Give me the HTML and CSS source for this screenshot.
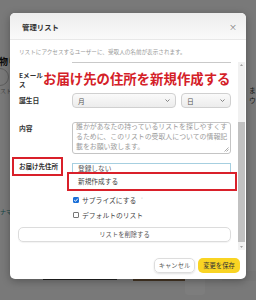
FILE: index.html
```html
<!DOCTYPE html>
<html lang="ja">
<head>
<meta charset="utf-8">
<link rel="stylesheet" href="styles.css">
</head>
<body>
<div class="page">
  <div class="bg-heading">物り</div>
  <div class="bg-circle"></div>
  <div class="bg-sub">ストー</div>
  <div class="bg-side">
    <div class="bg-left-img">ナマ</div>
    <div class="bg-right-text">ま<br>ウ</div>
  </div>
  <div class="bg-products">
    <div class="bg-frame"></div>
    <div class="bg-wood"></div>
    <div class="bg-box"></div>
    <div class="bg-card"></div>
  </div>
</div>
<div class="overlay"></div>

<div class="modal">
  <div class="modal-header">
    <span class="title">管理リスト</span>
    <span class="close">×</span>
  </div>
  <p class="desc">リストにアクセスするユーザーに、受取人の名前が表示されます。</p>
  <div class="scroll-wrap">
    <div class="scroll-content">
      <div class="top-line"></div>
      <div class="row email-row">
        <div class="label">Eメール<br>ス</div>
      </div>
      <div class="row birth-row">
        <div class="label">誕生日</div>
        <div class="field selects">
          <div class="select month">月
            <svg class="chev" width="5" height="3" viewBox="0 0 5 3"><polyline points="0.5,0.5 2.5,2.5 4.5,0.5" fill="none" stroke="#777" stroke-width="0.9"/></svg>
          </div>
          <div class="select day">日
            <svg class="chev" width="5" height="3" viewBox="0 0 5 3"><polyline points="0.5,0.5 2.5,2.5 4.5,0.5" fill="none" stroke="#777" stroke-width="0.9"/></svg>
          </div>
        </div>
      </div>
      <div class="row content-row">
        <div class="label">内容</div>
        <div class="field">
          <div class="textarea">
            <div class="ta-text">
              <div>誰かがあなたの持っているリストを探しやすくす</div>
              <div>るために、このリストの受取人についての情報記</div>
              <div>載をお願い致します。</div>
            </div>
            <svg class="grip" width="5" height="5" viewBox="0 0 5 5"><path d="M4.5 0.5 L0.5 4.5 M4.5 2.5 L2.5 4.5" stroke="#888" stroke-width="0.7"/></svg>
          </div>
        </div>
      </div>
      <div class="row addr-row">
        <div class="label"><div class="redbox">お届け先住所</div></div>
        <div class="field">
          <div class="dropdown">
            <div class="opt-first">登録しない</div>
            <div class="opt-new">新規作成する</div>
          </div>
        </div>
      </div>
      <div class="check-row">
        <span class="cb checked"><svg width="6" height="6" viewBox="0 0 6 6"><polyline points="1.2,3.1 2.5,4.3 4.9,1.6" fill="none" stroke="#fff" stroke-width="1"/></svg></span>
        <span>サプライズにする</span><span class="caret">˅</span>
      </div>
      <div class="check-row">
        <span class="cb"></span>
        <span>デフォルトのリスト</span>
      </div>
      <div class="delete-btn">リストを削除する</div>
    </div>
    <div class="scrollbar">
      <div class="sb-arrow"><svg width="7" height="6" viewBox="0 0 7 6"><polygon points="3.5,2 5,4 2,4" fill="#a0a0a0"/></svg></div>
      <div class="sb-track"><div class="sb-thumb"></div></div>
      <div class="sb-arrow"><svg width="7" height="6" viewBox="0 0 7 6"><polygon points="2,2 5,2 3.5,4" fill="#a0a0a0"/></svg></div>
    </div>
  </div>
  <div class="footer">
    <div class="btn btn-cancel">キャンセル</div>
    <div class="btn btn-save">変更を保存</div>
  </div>
  <div class="annotation">お届け先の住所を新規作成する</div>
</div>
</body>
</html>
```

FILE: styles.css
```css
* { box-sizing: border-box; margin: 0; padding: 0; }
html, body { width: 256px; height: 300px; overflow: hidden; }
body {
  font-family: "Noto Sans CJK JP", "Noto Sans", sans-serif;
  background: #f3f3f3;
  color: #333;
  position: relative;
}

/* background page */
.page { padding-top: 56px; }
.bg-heading { font-size: 9px; font-weight: 700; color: #111; margin-left: -1px; line-height: 12px; }
.bg-circle { width: 18px; height: 18px; border: 1px solid #bbb; border-radius: 50%; margin-left: -9px; }
.bg-sub { font-size: 6px; color: #888; margin-top: 1px; line-height: 8px; }
.bg-side { display: flex; justify-content: space-between; margin-top: 100px; height: 40px; }
.bg-left-img { font-size: 6px; color: #2a8a8a; padding-top: 12px; }
.bg-right-text { font-size: 7px; color: #333; margin-top: -110px; line-height: 10px; }
.bg-products { display: flex; margin-top: 36px; padding-left: 43px; }
.bg-frame { width: 74px; height: 9px; border-bottom: 2px solid #444; background: #e4e4e4; }
.bg-wood { width: 52px; height: 10px; margin-left: 16px; background: #8a6a4a; }
.bg-box { width: 20px; height: 24px; background: #fafafa; border-radius: 0 0 4px 4px; }
.bg-card { width: 34px; height: 10px; margin-left: 17px; background: #ececec; }

.overlay { position: absolute; inset: 0; background: rgba(0, 0, 0, 0.5); }

/* modal */
.modal {
  position: absolute; left: 10px; top: 13px;
  width: 236px; height: 266px;
  background: #fff; border-radius: 5px;
  box-shadow: 0 2px 8px rgba(0,0,0,0.3);
  overflow: hidden;
  display: flex; flex-direction: column;
}
.modal-header {
  height: 27px; flex: none;
  display: flex; align-items: center; justify-content: space-between;
  padding: 0 9px 0 12px;
  background: linear-gradient(#ededed, #fafafa);
  border-bottom: 1px solid #e8e8e8;
}
.title { font-size: 7.4px; font-weight: 700; color: #333; }
.close { font-size: 8px; color: #777; }
.desc { height: 22px; flex: none; font-size: 5.6px; line-height: 10px; color: #9a9a9a; padding: 7px 9px 0; white-space: nowrap; }

.scroll-wrap { height: 188px; flex: none; display: flex; }
.scroll-content { flex: 1; min-width: 0; padding: 0 7px 0 9px; overflow: hidden; }
.top-line { height: 1px; margin-left: 53px; background: #c9c9c9; }
.row { display: flex; }
.label { width: 53px; flex: none; font-size: 6.8px; font-weight: 700; color: #333; }
.field { flex: 1; min-width: 0; }

.email-row { height: 27px; }
.email-row .label { padding-top: 8px; line-height: 9px; font-size: 6.6px; }

.birth-row { margin-top: 3px; height: 15px; }
.birth-row .label { line-height: 15px; }
.selects { display: flex; gap: 5px; }
.select {
  height: 15px; border: 1px solid #d0d0d0; border-radius: 4px;
  background: linear-gradient(#fafafa, #ececec);
  display: flex; align-items: center; justify-content: space-between;
  padding: 0 5px 0 5px; font-size: 6.8px; color: #555;
}
.month { width: 104px; }
.day { width: 50px; }

.content-row { margin-top: 14px; }
.content-row .label { line-height: 12px; }
.textarea {
  height: 32px; border: 1px solid #c4c4c4; border-radius: 3px;
  padding: 0 3px; overflow: hidden; position: relative;
  font-size: 6.9px; line-height: 10px; color: #9a9a9a;
}
.ta-text { margin-top: -2px; white-space: nowrap; }
.grip { position: absolute; right: 1px; bottom: 1px; }

.addr-row { margin-top: 3px; }
.redbox {
  margin-left: -7px; width: 51px; height: 19px;
  border: 2px solid #d9202a; padding-left: 5px;
  line-height: 15px; font-size: 6.5px; white-space: nowrap;
}
.dropdown { margin-top: 6px; font-size: 6.7px; color: #444; }
.opt-first {
  height: 10px; border: 1px solid #a6cfe0; border-bottom: none;
  padding-left: 5px; line-height: 9px; color: #555;
}
.opt-new {
  margin: -1px -6px 0 -5px; height: 19px;
  border: 2px solid #d9202a; background: #fff;
  padding-left: 9px; line-height: 15px;
}

.check-row {
  height: 15px; display: flex; align-items: center;
  padding-left: 54px; font-size: 6.8px; color: #444;
}
.addr-row + .check-row { margin-top: 1px; }
.cb {
  width: 6px; height: 6px; border: 1px solid #777; border-radius: 1px;
  margin-right: 3px; background: #fff; display: flex; flex: none;
}
.cb.checked { background: #1a6fd8; border-color: #1a6fd8; }
.cb.checked svg { margin: -1px; }
.caret { font-size: 5px; color: #999; margin-left: 5px; }

.delete-btn {
  margin: 5px 0 0 -1px; height: 15px;
  border: 1px solid #dcdcdc; border-radius: 5px;
  box-shadow: 0 1px 1px rgba(0,0,0,0.05);
  font-size: 6.3px; line-height: 13px; text-align: center; color: #555;
}

.scrollbar { width: 7px; margin-right: 1px; background: #f1f1f1; display: flex; flex-direction: column; }
.sb-arrow { height: 6px; flex: none; display: flex; }
.sb-track { flex: 1; }
.sb-thumb { margin-top: 54px; height: 120px; background: #c1c1c1; }

.footer { flex: 1; display: flex; justify-content: flex-end; gap: 3px; padding: 8px 6px 0 0; }
.btn {
  height: 15px; border-radius: 5px; font-size: 6.3px; line-height: 15px;
  text-align: center; color: #333;
}
.btn-cancel { width: 41px; border: 1px solid #ddd; line-height: 13px; box-shadow: 0 1px 2px rgba(0,0,0,0.12); color: #555; }
.btn-save { width: 42px; background: #f9d423; }

.annotation {
  position: absolute; left: 33px; top: 57px;
  font-size: 13.4px; line-height: 16px; font-weight: 700;
  color: #d42027; white-space: nowrap;
}
```
